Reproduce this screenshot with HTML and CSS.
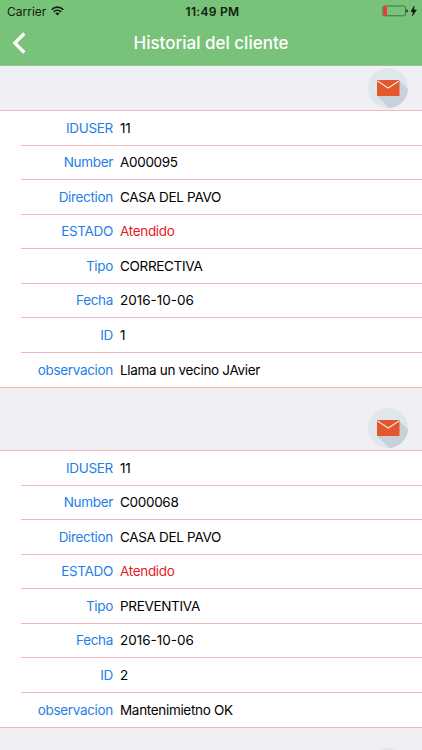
FILE: index.html
```html
<!DOCTYPE html>
<html lang="es">
<head>
  <meta charset="UTF-8">
  <meta name="viewport" content="width=device-width, initial-scale=1.0">
  <title>Historial del cliente</title>
  <link rel="stylesheet" href="styles.css">
</head>
<body>
  <!-- Shared mail icon -->
  <svg class="sprite" width="0" height="0">
    <symbol id="mail" viewBox="0 0 40 40">
      <clipPath id="disc"><circle cx="20" cy="20" r="20"/></clipPath>
      <circle cx="20" cy="20" r="20" fill="#e0e7ec"/>
      <path d="M9 28 L31 12.500 L42 23 V42 H23 Z" fill="#c8d1d7" clip-path="url(#disc)"/>
      <rect x="9" y="12" width="22.500" height="16" rx=".8" fill="#e2572b"/>
      <path d="M9.500 13 L20.250 20 L31 13" fill="none" stroke="#f6e3df" stroke-width="1.200"/>
    </symbol>
  </svg>

  <div class="screen">
    <header class="header">
      <div class="status-bar">
        <div class="carrier">
          <span>Carrier</span>
          <svg width="13" height="10" viewBox="0 0 13 10" fill="none" stroke="#10200f" stroke-width="1.600">
            <path d="M.7 3.700 C4 .2 9 .2 12.300 3.700"/>
            <path d="M2.800 5.900 C5 3.700 8 3.700 10.200 5.900"/>
            <path d="M4.300 7.300 Q6.500 5.500 8.700 7.300 L6.500 9.600 Z" fill="#10200f" stroke="none"/>
          </svg>
        </div>
        <div class="time">11:49 PM</div>
        <div class="battery">
          <svg width="36" height="12" viewBox="0 0 36 12">
            <rect x=".9" y="1" width="22.600" height="9.800" rx="1.600" fill="none" stroke="#3c6a3c" stroke-width=".9"/>
            <rect x="1.300" y="1.400" width="3.700" height="9" rx=".6" fill="#f23b30"/>
            <path d="M24.400 4.200 q1.400 0 1.400 1.700 t-1.400 1.700 Z" fill="#10200f"/>
            <path d="M32.200 .9 L28.900 6.700 H31.200 L30.300 11 L34.500 4.900 H31.900 Z" fill="#0a120a" stroke="#0a120a" stroke-width=".4"/>
          </svg>
        </div>
      </div>
      <div class="nav-bar">
        <svg class="back" width="16" height="22" viewBox="0 0 16 22">
          <path d="M13.300 1.500 L3.800 11 L13.300 20.500" fill="none" stroke="#fff" stroke-width="3.200"/>
        </svg>
        <h1>Historial del cliente</h1>
      </div>
    </header>

    <main>
      <div class="section-header first"><svg class="mail"><use href="#mail"/></svg></div>
      <ul class="list">
        <li><span class="label">IDUSER</span><span class="value">11</span></li>
        <li><span class="label">Number</span><span class="value">A000095</span></li>
        <li><span class="label">Direction</span><span class="value">CASA DEL PAVO</span></li>
        <li><span class="label">ESTADO</span><span class="value done">Atendido</span></li>
        <li><span class="label">Tipo</span><span class="value">CORRECTIVA</span></li>
        <li><span class="label">Fecha</span><span class="value date">2016-10-06</span></li>
        <li><span class="label">ID</span><span class="value">1</span></li>
        <li><span class="label">observacion</span><span class="value">Llama un vecino JAvier</span></li>
      </ul>

      <div class="section-header"><svg class="mail"><use href="#mail"/></svg></div>
      <ul class="list">
        <li><span class="label">IDUSER</span><span class="value">11</span></li>
        <li><span class="label">Number</span><span class="value">C000068</span></li>
        <li><span class="label">Direction</span><span class="value">CASA DEL PAVO</span></li>
        <li><span class="label">ESTADO</span><span class="value done">Atendido</span></li>
        <li><span class="label">Tipo</span><span class="value">PREVENTIVA</span></li>
        <li><span class="label">Fecha</span><span class="value date">2016-10-06</span></li>
        <li><span class="label">ID</span><span class="value">2</span></li>
        <li><span class="label">observacion</span><span class="value">Mantenimietno OK</span></li>
      </ul>

      <div class="section-header"><svg class="mail"><use href="#mail"/></svg></div>
    </main>
  </div>
</body>
</html>
```

FILE: styles.css
```css
* {
  box-sizing: border-box;
}
body {
  margin: 0;
  color: #000;
  font-family: Inter, "Liberation Sans", sans-serif;
  font-size: 13.5px;
}
.sprite {
  display: block;
}
.screen {
  height: 750px;
  overflow: hidden;
  background: #efeff4;
}
.header {
  height: 66px;
  background: #78c27a;
  border-bottom: 1px solid #8fc493;
}
.status-bar {
  display: grid;
  grid-template-columns: 1fr auto 1fr;
  align-items: center;
  height: 22px;
  padding: 0 4px 0 7px;
  font-size: 12px;
  color: #10200f;
}
.carrier {
  display: flex;
  align-items: center;
  gap: 5px;
}
.time {
  font-weight: 600;
  letter-spacing: 0.3px;
}
.battery {
  display: flex;
  justify-content: flex-end;
}
.nav-bar {
  display: grid;
  grid-template-columns: 60px 1fr 60px;
  align-items: center;
  height: 42px;
}
.back {
  margin-left: 11px;
}
h1 {
  margin: 0;
  text-align: center;
  color: #fff;
  font-size: 17px;
  font-weight: 500;
}
.section-header {
  display: flex;
  justify-content: flex-end;
  align-items: flex-end;
  height: 62px;
  padding: 0 14px 2px 0;
}
.section-header.first {
  height: 44px;
}
.mail {
  width: 40px;
  height: 40px;
}
.list {
  list-style: none;
  margin: 0;
  padding: 0;
  height: 278px;
  display: grid;
  grid-template-rows: repeat(8, 1fr);
  background: #fff;
  border-top: 1px solid #f4b6bb;
  border-bottom: 1px solid #f4b6bb;
}
.list li {
  display: grid;
  grid-template-columns: 92px 1fr;
  column-gap: 7px;
  align-items: center;
  margin-left: 21px;
  border-bottom: 1px solid #f4b6bb;
  letter-spacing: -0.32px;
}
.list li:last-child {
  border-bottom: none;
}
.label {
  text-align: right;
  color: #1f80e8;
}
.value.date {
  letter-spacing: 0;
}
.value.done {
  color: #e8191f;
}
```
